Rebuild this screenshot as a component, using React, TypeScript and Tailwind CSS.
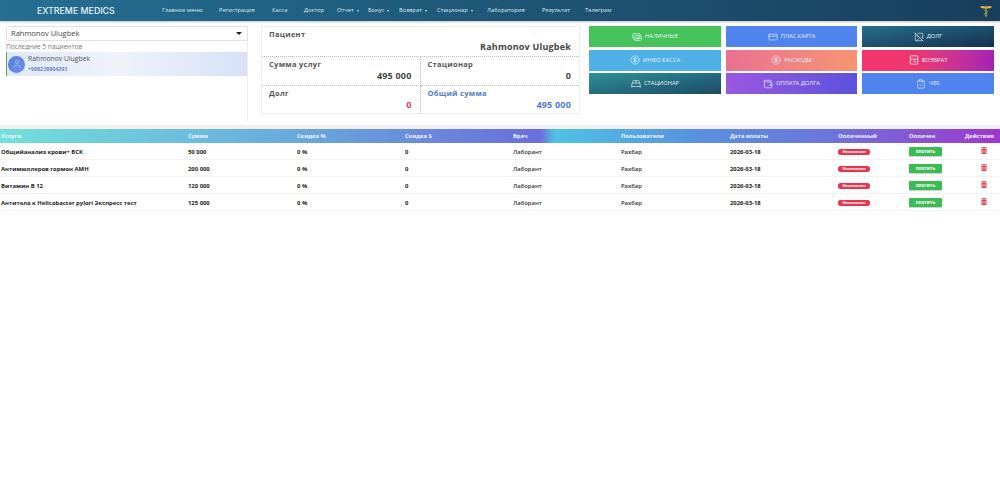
import { CircleDollarSign, ClipboardCheck, CreditCard, ImageOff, BedDouble, User, Wallet } from 'lucide-react'
import { FaTrashAlt } from 'react-icons/fa'

// пачка купюр
function CashIcon({ className }: { className?: string }) {
  return (
    <svg viewBox="0 0 24 24" fill="none" stroke="currentColor" strokeWidth="1.8" className={className}>
      <rect x="2" y="4" width="17" height="12" rx="2" />
      <rect x="6" y="9" width="16" height="11" rx="2" />
      <circle cx="14" cy="14.5" r="2" />
    </svg>
  )
}

function RefundIcon({ className }: { className?: string }) {
  return (
    <svg viewBox="0 0 24 24" fill="none" stroke="currentColor" strokeWidth="2" className={className}>
      <rect x="3" y="2" width="18" height="20" rx="2" />
      <path d="M3 10h18M10 15h5v3" />
    </svg>
  )
}

const menu = [
  { label: 'Главное меню', cls: 'w-[57px]' },
  { label: 'Регистрация', cls: 'w-[53px]' },
  { label: 'Касса', cls: 'w-[32px]' },
  { label: 'Доктор', cls: 'w-[33px]' },
  { label: 'Отчет', caret: true, cls: 'w-[31px]' },
  { label: 'Бонус', caret: true, cls: 'w-[31px]' },
  { label: 'Возврат', caret: true, cls: 'w-[38px]' },
  { label: 'Стационар', caret: true, cls: 'w-[50px]' },
  { label: 'Лаборатория', cls: 'w-[55px]' },
  { label: 'Результат', cls: 'w-[43px]' },
  { label: 'Телеграм', cls: 'w-[42px]' },
]

const actions = [
  { label: 'НАЛИЧНЫЕ', icon: CashIcon, bg: 'bg-[#45c35a]' },
  { label: 'ПЛАС.КАРТА', icon: CreditCard, bg: 'bg-[#4f83ee]' },
  { label: 'ДОЛГ', icon: ImageOff, bg: 'bg-gradient-to-br from-[#27708f] to-[#14324d]' },
  { label: 'ИНФО КАССА', icon: CircleDollarSign, bg: 'bg-[#4fb0e6]' },
  { label: 'РАСХОДЫ', icon: CircleDollarSign, bg: 'bg-gradient-to-r from-[#ea7090] to-[#f59573]' },
  { label: 'ВОЗВРАТ', icon: RefundIcon, bg: 'bg-gradient-to-r from-[#f0356f] from-40% to-[#a51fb4]' },
  { label: 'СТАЦИОНАР', icon: BedDouble, bg: 'bg-gradient-to-br from-[#2f9298] to-[#1c4a68]' },
  { label: 'ОПЛАТА ДОЛГА', icon: Wallet, bg: 'bg-gradient-to-r from-[#9a57e0] to-[#5b52de]' },
  { label: 'ЧЕК', icon: ClipboardCheck, bg: 'bg-[#4f83ee]' },
]

const columns = 'grid grid-cols-[188px_109px_108px_108px_108px_109px_108px_71px_56px_35px]'

const headers = ['Услуги', 'Сумма', 'Скидка %', 'Скидка $', 'Врач', 'Пользователи', 'Дата оплаты', 'Оплаченный', 'Оплачен', 'Действия']

const services = [
  { name: 'Общийанализ крови+ ВСК', sum: '50 000' },
  { name: 'Антимюллеров гормон АМН', sum: '200 000' },
  { name: 'Витамин В 12', sum: '120 000' },
  { name: 'Антитела к Helicobacter pylori Экспресс тест', sum: '125 000' },
]

function Cell({ title, value, titleCls, valueCls, className }: { title: string; value: string; titleCls?: string; valueCls?: string; className?: string }) {
  return (
    <div className={`flex flex-col pl-[7px] pr-2 pt-[1px] pb-[3px] ${className ?? ''}`}>
      <p className={`text-[7.5px] leading-[12px] font-bold tracking-[0.3px] ${titleCls ?? 'text-[#555]'}`}>{title}</p>
      <p className={`mt-auto text-right text-[9px] leading-[12px] font-bold tracking-[0.2px] ${valueCls ?? 'text-[#444]'}`}>{value}</p>
    </div>
  )
}

export default function App() {
  return (
    <div className="w-[1000px] h-[490px] bg-white overflow-hidden font-['Open_Sans',sans-serif]">
      {/* Navbar */}
      <nav className="h-[21px] flex items-center bg-gradient-to-r from-[#256f93] to-[#173f5c] shadow-[0_1px_2px_rgba(0,0,0,0.25)]">
        <span className="ml-[37px] w-[125px] text-[8.8px] font-medium text-[#e8f2f8] whitespace-nowrap font-['Inter',sans-serif]">EXTREME MEDICS</span>
        <div className="flex items-center">
          {menu.map((m, i) => (
            <span key={i} className={`flex items-center gap-[3px] whitespace-nowrap text-[5.8px] text-[#dceaf2] ${m.cls}`}>
              {m.label}
              {m.caret && <i className="border-x-[1.5px] border-t-[2px] border-x-transparent border-t-[#dceaf2]" />}
            </span>
          ))}
        </div>
        <svg viewBox="0 0 20 20" className="ml-auto mr-[7px] w-[14px] h-[15px]">
          <path d="M1 5 Q6 2 9 5 L11 5 Q14 2 19 5 Q14 8 11 7 L9 7 Q6 8 1 5Z" fill="#e8b84a" />
          <rect x="9" y="3" width="2" height="16" fill="#c8a03c" />
          <path d="M7 10 Q13 10 13 12 Q7 13 7 15 Q13 15 12 17" stroke="#6b9a4a" strokeWidth="1.2" fill="none" />
        </svg>
      </nav>

      {/* Top panels */}
      <div className="flex h-[98px] mt-[5px]">
        <div className="w-[242px] ml-[6px] h-[96px] border-r border-r-[#eee]">
          <div className="h-[15px] flex items-center justify-between border border-[#e2e2e2] rounded-[2px] px-[4px] text-[7.5px] font-medium text-[#444] w-[242px]">
            Rahmonov Ulugbek
            <i className="mr-[1px] border-x-[3px] border-t-[3px] border-x-transparent border-t-[#222]" />
          </div>
          <p className="text-[6.5px] leading-[9px] mt-[1px] text-[#777]">Последние 5 пациентов</p>
          <div className="mt-[1px] h-[24px] w-[241px] flex items-center border-l border-l-[#5fa35f] bg-[linear-gradient(90deg,#dfe8f5_0%,#eef3fa_45%,#d7e2f8_100%)]">
            <div className="ml-[1px] w-[17px] h-[17px] rounded-full bg-gradient-to-br from-[#4f7fe0] to-[#6f8fe8] flex items-center justify-center">
              <User className="w-[10px] h-[10px] text-[#a9c0f0]" />
            </div>
            <div className="ml-[3px] -mt-[1px]">
              <p className="text-[6.8px] leading-[10px] font-medium text-[#555]">Rahmonov Ulugbek</p>
              <p className="text-[5.3px] leading-[10px] font-semibold text-[#4a6fc0]">+998238904293</p>
            </div>
          </div>
        </div>

        <div className="ml-[13px] w-[319px] h-[88px] border border-[#eee] grid grid-cols-2 grid-rows-[30px_29px_1fr]">
          <Cell title="Пациент" value="Rahmonov Ulugbek" className="col-span-2 border-b border-dotted border-b-[#bbb]" />
          <Cell title="Сумма услуг" value="495 000" className="border-b border-r border-dotted border-[#bbb]" />
          <Cell title="Стационар" value="0" className="border-b border-dotted border-b-[#bbb]" />
          <Cell title="Долг" value="0" valueCls="text-[#d9405a]" className="border-r border-dotted border-r-[#bbb]" />
          <Cell title="Общий сумма" value="495 000" titleCls="text-[#4f79c9]" valueCls="text-[#4f79c9]" />
        </div>

        <div className="ml-[9px] w-[405px] h-[68px] grid grid-cols-[132px_131px_132px] grid-rows-3 gap-x-[5px] gap-y-[2.5px]">
          {actions.map((a) => (
            <button key={a.label} className={`flex items-center justify-center gap-[3px] text-[5.8px] font-medium text-[#e8f3fa] ${a.bg}`}>
              <a.icon className="w-[10px] h-[10px]" strokeWidth={1.5} />
              {a.label}
            </button>
          ))}
        </div>
      </div>

      {/* Table */}
      <div className="border-t-[4px] border-t-[#f1f1f1] mt-[1px]">
        <div className={`${columns} h-[14px] items-center text-[5.7px] font-bold text-[#f2f6fc] bg-[linear-gradient(90deg,#72e0dc_0%,#6aa8dc_30%,#6a6edc_54%,#4dc2e4_55.5%,#5a90e0_70%,#6a78dc_82%,#a035cf_100%)]`}>
          {headers.map((h, i) => (
            <span key={h} className={`whitespace-nowrap ${i === 0 ? 'pl-[1px]' : ''}`}>{h}</span>
          ))}
        </div>
        {services.map((s) => (
          <div key={s.name} className={`${columns} h-[17px] items-center pt-[2px] border-b border-b-[#f2f2f2] text-[5.9px] text-[#222]`}>
            <span className="pl-[1px] font-bold whitespace-nowrap">{s.name}</span>
            <span className="font-bold">{s.sum}</span>
            <span className="font-bold">0 %</span>
            <span className="font-bold">0</span>
            <span className="font-semibold text-[#333]">Лаборант</span>
            <span className="font-semibold text-[#333]">Рахбар</span>
            <span className="font-bold">2026-03-18</span>
            <span className="flex">
              <span className="inline-flex h-[6px] w-[32px] items-center justify-center rounded-full bg-[#e0394f] text-[4px] font-bold text-white shadow-[0_0_1px_rgba(224,57,79,0.6)]">Неоплачен</span>
            </span>
            <span className="flex -mt-[2px]">
              <span className="inline-flex h-[9px] w-[33px] items-center justify-center rounded-[1px] bg-[#3cbb55] text-[4.5px] font-bold text-white shadow-[0_1px_1px_rgba(0,0,0,0.2)]">плотить</span>
            </span>
            <span className="pl-[16px] -mt-[4px]">
              <FaTrashAlt className="w-[6px] h-[7px] text-[#dc4052]" />
            </span>
          </div>
        ))}
      </div>
    </div>
  )
}
